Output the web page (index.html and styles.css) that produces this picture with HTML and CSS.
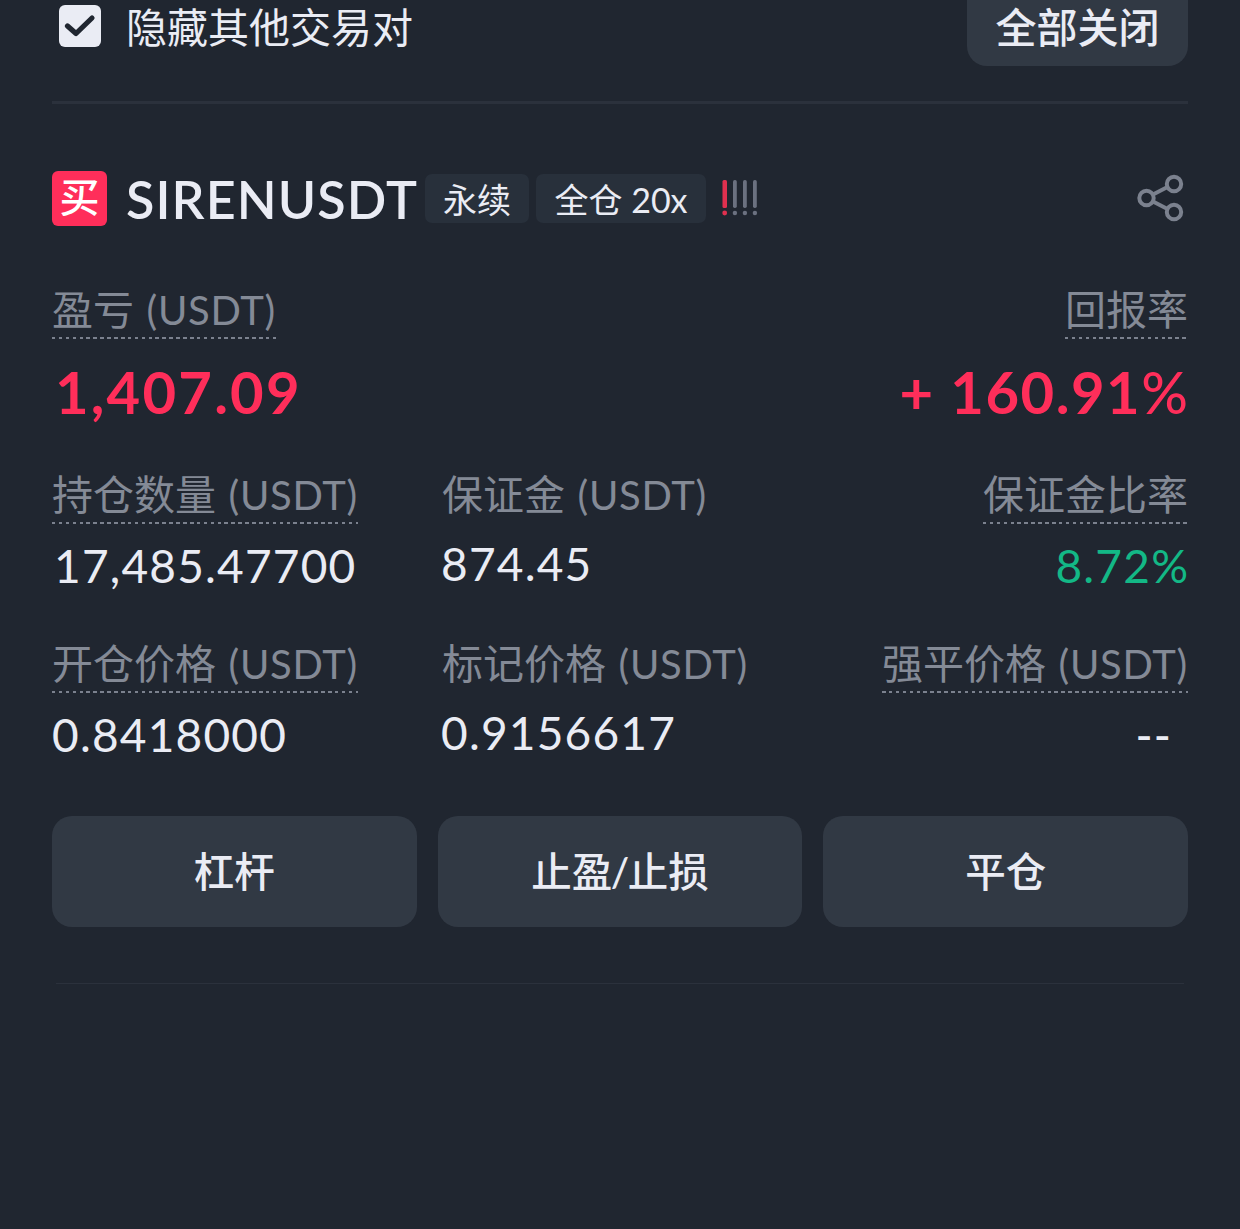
FILE: index.html
```html
<!DOCTYPE html>
<html lang="zh-CN">
<head>
    <meta charset="UTF-8">
    <meta name="viewport" content="width=device-width, initial-scale=1.0">
    <title>SIRENUSDT 永续</title>
    <link rel="stylesheet" href="styles.css">
</head>
<body>

    <div class="toolbar">
        <label class="filter">
            <svg class="checkbox" viewBox="0 0 42 42">
                <rect width="42" height="42" rx="6" fill="#eaecf4"/>
                <path d="M8.500 21L17 28.500L33 13" fill="none" stroke="#202630" stroke-width="5.200" stroke-linecap="round" stroke-linejoin="round"/>
            </svg>
            <span class="filter-text">隐藏其他交易对</span>
        </label>
        <button class="close-all">全部关闭</button>
    </div>

    <div class="position">
        <div class="symbol-row">
            <span class="side">买</span>
            <span class="symbol">SIRENUSDT</span>
            <span class="tag">永续</span>
            <span class="tag tag-wide">全仓 <span class="lever">20x</span></span>
            <svg class="risk" viewBox="0 0 36 36" fill="#6b7180">
                <g fill="#e0304f"><rect x="0.500" y="0" width="4.500" height="28" rx="1.500"/><circle cx="2.700" cy="33" r="2.400"/></g>
                <rect x="11" y="0" width="3.800" height="28" rx="1.700"/><circle cx="12.900" cy="33" r="2.200"/>
                <rect x="21" y="0" width="3.800" height="28" rx="1.700"/><circle cx="22.900" cy="33" r="2.200"/>
                <rect x="31" y="0" width="3.800" height="28" rx="1.700"/><circle cx="32.900" cy="33" r="2.200"/>
            </svg>
            <svg class="share" viewBox="0 0 48 48" fill="none" stroke="#7b818e" stroke-width="4">
                <circle cx="9.500" cy="24" r="7.200"/>
                <circle cx="37" cy="10" r="7.200"/>
                <circle cx="37" cy="38" r="7.200"/>
                <path d="M16 20.500L30.500 13M16 27.500L30.500 35"/>
            </svg>
        </div>

        <div class="row row-main">
            <div class="cell">
                <div class="label dotted">盈亏 <span class="unit">(USDT)</span></div>
                <div class="value big profit">1,407.09</div>
            </div>
            <div class="cell right">
                <div class="label dotted">回报率</div>
                <div class="value big">+ 160.91<span class="percent">%</span></div>
            </div>
        </div>

        <div class="row">
            <div class="cell">
                <div class="label dotted">持仓数量 <span class="unit">(USDT)</span></div>
                <div class="value amount">17,485.47700</div>
            </div>
            <div class="cell plain">
                <div class="label">保证金 <span class="unit">(USDT)</span></div>
                <div class="value">874.45</div>
            </div>
            <div class="cell right">
                <div class="label dotted">保证金比率</div>
                <div class="value green">8.72<span class="percent">%</span></div>
            </div>
        </div>

        <div class="row">
            <div class="cell">
                <div class="label dotted">开仓价格 <span class="unit">(USDT)</span></div>
                <div class="value">0.8418000</div>
            </div>
            <div class="cell plain">
                <div class="label">标记价格 <span class="unit">(USDT)</span></div>
                <div class="value">0.9156617</div>
            </div>
            <div class="cell right">
                <div class="label dotted">强平价格 <span class="unit">(USDT)</span></div>
                <div class="value empty">--</div>
            </div>
        </div>

        <div class="actions">
            <button>杠杆</button>
            <button>止盈<span class="slash">/</span>止损</button>
            <button>平仓</button>
        </div>
    </div>

</body>
</html>
```

FILE: styles.css
```css
* {
    box-sizing: border-box;
}

body {
    margin: 0;
    height: 1229px;
    padding: 0 52px;
    background: #202630;
    color: #eaecf4;
    font-family: "Lato", "Noto Sans CJK SC", sans-serif;
    overflow: hidden;
}

button {
    border: none;
    background: #313944;
    color: #eaecf4;
    font-family: inherit;
    font-size: 41px;
    font-weight: 500;
    padding: 0;
}

.toolbar {
    display: flex;
    justify-content: space-between;
    align-items: flex-start;
    height: 104px;
    border-bottom: 3px solid #2b313c;
}

.filter {
    display: flex;
    align-items: center;
    gap: 25px;
    height: 52px;
    padding-left: 7px;
    font-size: 41px;
}

.filter-text {
    padding-top: 4px;
    line-height: 52px;
}

.checkbox {
    width: 42px;
    height: 42px;
}

.close-all {
    width: 221px;
    height: 66px;
    padding-bottom: 10px;
    border-radius: 0 0 20px 20px;
    line-height: 56px;
}

.symbol-row {
    display: flex;
    align-items: center;
    height: 56px;
    margin-top: 66px;
}

.side {
    width: 55px;
    height: 55px;
    border-radius: 6px;
    background: #ff2e5a;
    color: #fff;
    font-size: 40px;
    font-weight: 500;
    line-height: 53px;
    text-align: center;
}

.symbol {
    width: 299px;
    margin-left: 19px;
    padding-top: 2px;
    font-size: 52px;
    font-weight: 600;
    letter-spacing: 1.1px;
    line-height: 56px;
    white-space: nowrap;
}

.tag {
    width: 104px;
    height: 49px;
    border-radius: 7px;
    background: #28303b;
    font-size: 34px;
    line-height: 51px;
    text-align: center;
    white-space: nowrap;
}

.tag-wide {
    width: 170px;
    margin-left: 7px;
}

.risk {
    width: 36px;
    height: 36px;
    margin-left: 16px;
}

.share {
    width: 48px;
    height: 48px;
    margin-left: auto;
    margin-right: 3px;
}

.row {
    display: grid;
    grid-template-columns: 389px 1fr auto;
    height: 169px;
}

.row-main {
    grid-template-columns: 1fr auto;
    height: 185px;
    margin-top: 59px;
}

.cell {
    display: flex;
    flex-direction: column;
    align-items: flex-start;
}

.right {
    align-items: flex-end;
}

.label {
    height: 54px;
    color: #848a96;
    font-size: 41px;
    line-height: 50px;
    white-space: nowrap;
}

.plain .label {
    padding-left: 1px;
}

.unit {
    margin-left: 2px;
    font-size: 40px;
    letter-spacing: 0.7px;
}

.dotted {
    background: repeating-linear-gradient(90deg, #7b818e 0 3.5px, transparent 3.5px 6.9px) left bottom / 100% 2.5px no-repeat;
}

.value {
    margin-top: 12px;
    font-size: 46px;
    letter-spacing: 1.2px;
    line-height: 60px;
    white-space: nowrap;
}

.plain .value {
    margin-top: 10px;
}

.amount {
    padding-left: 2px;
}

.big {
    margin-top: 23px;
    color: #ff2e5a;
    font-size: 58px;
    font-weight: 700;
    letter-spacing: 1.5px;
}

.profit {
    padding-left: 3px;
    letter-spacing: 2.2px;
}

.percent {
    font-weight: 500;
    letter-spacing: 0;
}

.green {
    color: #13b886;
}

.green .percent {
    font-weight: 400;
}

.empty {
    margin-right: 16px;
    font-weight: 500;
}

.actions {
    display: grid;
    grid-template-columns: repeat(3, 1fr);
    gap: 21px;
    margin-top: 8px;
    padding-bottom: 56px;
}

.actions button {
    height: 111px;
    padding-bottom: 4px;
    border-radius: 20px;
    font-size: 40.5px;
}

.slash {
    margin: 0 -1.5px;
}

.position::after {
    content: "";
    display: block;
    height: 1px;
    margin: 0 4px;
    background: #2b313c;
}
```
